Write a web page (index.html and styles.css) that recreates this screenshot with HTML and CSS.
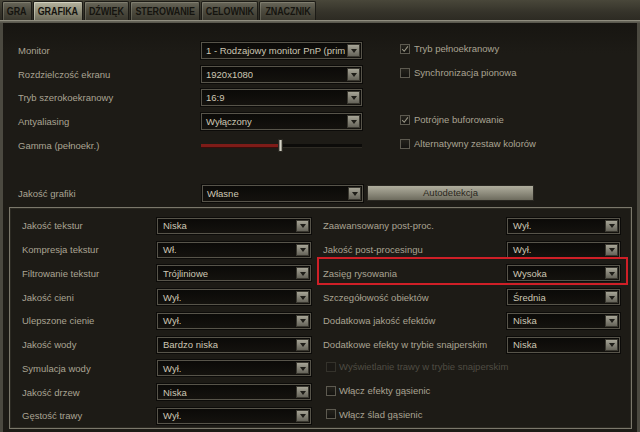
FILE: index.html
```html
<!DOCTYPE html>
<html lang="pl">
<head>
<meta charset="utf-8">
<link rel="stylesheet" href="styles.css">
</head>
<body>
<div class="window">
  <div class="tabs">
    <div class="tab t-gra"><span>GRA</span></div>
    <div class="tab t-grafika active"><span>GRAFIKA</span></div>
    <div class="tab t-dzwiek"><span>DŹWIĘK</span></div>
    <div class="tab t-sterowanie"><span>STEROWANIE</span></div>
    <div class="tab t-celownik"><span>CELOWNIK</span></div>
    <div class="tab t-znacznik"><span>ZNACZNIK</span></div>
  </div>
  <div class="topline"></div>
  <div class="content">
    <div class="general">
      <div class="lbl">Monitor</div>
      <div class="sel big"><span class="val">1 - Rodzajowy monitor PnP (prim</span><span class="arr"></span></div>
      <div></div>
      <label class="chk"><span class="cb on"><svg viewBox="0 0 10 10"><path d="M1.5 5.2 L4 7.8 L8.6 1.8"/></svg></span>Tryb pełnoekranowy</label>

      <div class="lbl">Rozdzielczość ekranu</div>
      <div class="sel big"><span class="val">1920x1080</span><span class="arr"></span></div>
      <div></div>
      <label class="chk"><span class="cb"></span>Synchronizacja pionowa</label>

      <div class="lbl">Tryb szerokoekranowy</div>
      <div class="sel big"><span class="val">16:9</span><span class="arr"></span></div>
      <div></div>
      <div></div>

      <div class="lbl">Antyaliasing</div>
      <div class="sel big"><span class="val">Wyłączony</span><span class="arr"></span></div>
      <div></div>
      <label class="chk"><span class="cb on"><svg viewBox="0 0 10 10"><path d="M1.5 5.2 L4 7.8 L8.6 1.8"/></svg></span>Potrójne buforowanie</label>

      <div class="lbl">Gamma (pełnoekr.)</div>
      <div class="slider"><div class="fill"></div><div class="rest"></div><div class="thumb"></div></div>
      <div></div>
      <label class="chk"><span class="cb"></span>Alternatywny zestaw kolorów</label>
    </div>

    <div class="quality">
      <div class="lbl qlbl">Jakość grafiki</div>
      <div class="sel big qsel"><span class="val">Własne</span><span class="arr"></span></div>
      <button class="btn">Autodetekcja</button>
    </div>

    <div class="box">
      <div class="lbl">Jakość tekstur</div>
      <div class="sel"><span class="val">Niska</span><span class="arr"></span></div>
      <div></div>
      <div class="lbl">Zaawansowany post-proc.</div>
      <div class="sel"><span class="val">Wył.</span><span class="arr"></span></div>

      <div class="lbl">Kompresja tekstur</div>
      <div class="sel"><span class="val">Wł.</span><span class="arr"></span></div>
      <div></div>
      <div class="lbl">Jakość post-procesingu</div>
      <div class="sel"><span class="val">Wył.</span><span class="arr"></span></div>

      <div class="lbl">Filtrowanie tekstur</div>
      <div class="sel"><span class="val">Trójliniowe</span><span class="arr"></span></div>
      <div></div>
      <div class="pair hl">
        <div class="lbl">Zasięg rysowania</div>
        <div class="sel"><span class="val">Wysoka</span><span class="arr"></span></div>
      </div>

      <div class="lbl">Jakość cieni</div>
      <div class="sel"><span class="val">Wył.</span><span class="arr"></span></div>
      <div></div>
      <div class="lbl">Szczegółowość obiektów</div>
      <div class="sel"><span class="val">Średnia</span><span class="arr"></span></div>

      <div class="lbl">Ulepszone cienie</div>
      <div class="sel"><span class="val">Wył.</span><span class="arr"></span></div>
      <div></div>
      <div class="lbl">Dodatkowa jakość efektów</div>
      <div class="sel"><span class="val">Niska</span><span class="arr"></span></div>

      <div class="lbl">Jakość wody</div>
      <div class="sel"><span class="val">Bardzo niska</span><span class="arr"></span></div>
      <div></div>
      <div class="lbl">Dodatkowe efekty w trybie snajperskim</div>
      <div class="sel"><span class="val">Niska</span><span class="arr"></span></div>

      <div class="lbl">Symulacja wody</div>
      <div class="sel"><span class="val">Wył.</span><span class="arr"></span></div>
      <div></div>
      <label class="chk wide disabled"><span class="cb"></span>Wyświetlanie trawy w trybie snajperskim</label>

      <div class="lbl">Jakość drzew</div>
      <div class="sel"><span class="val">Niska</span><span class="arr"></span></div>
      <div></div>
      <label class="chk wide"><span class="cb"></span>Włącz efekty gąsienic</label>

      <div class="lbl">Gęstość trawy</div>
      <div class="sel"><span class="val">Wył.</span><span class="arr"></span></div>
      <div></div>
      <label class="chk wide"><span class="cb"></span>Włącz ślad gąsienic</label>
    </div>
  </div>
</div>
</body>
</html>
```

FILE: styles.css
```css
* { box-sizing: border-box; }
html, body { margin: 0; padding: 0; }
body {
  background: #1c1a15;
  font-family: "Liberation Sans", Arial, sans-serif;
  font-size: 9.5px;
  color: #aaa493;
}
.window {
  width: 640px;
  height: 432px;
  display: flex;
  flex-direction: column;
  overflow: hidden;
}
.tabs {
  height: 20px;
  display: flex;
  padding-left: 2px;
  padding-top: 1px;
  background: linear-gradient(#49473a, #35332a 60%, #2d2b23);
}
.tab {
  height: 19px;
  display: flex;
  align-items: center;
  justify-content: center;
  border: 1px solid #1c1b16;
  border-bottom: none;
  border-radius: 2px 2px 0 0;
  background: linear-gradient(#69675a, #4e4c40 45%, #3a382e);
  box-shadow: inset 1px 1px 0 rgba(200,198,180,0.25);
  margin-right: 1px;
  color: #15140f;
  font-weight: bold;
  font-size: 11.5px;
}
.tab span { display: inline-block; transform: scaleX(0.78); white-space: nowrap; letter-spacing: -0.1px; }
.tab.active {
  background: linear-gradient(#b5b39f, #96947f 45%, #6f6d5c);
  color: #14130e;
  box-shadow: inset 1px 1px 0 rgba(255,255,240,0.4);
}
.t-gra { width: 30px; }
.t-grafika { width: 50px; }
.t-dzwiek { width: 45px; }
.t-sterowanie { width: 70px; }
.t-celownik { width: 57px; }
.t-znacznik { width: 57px; }
.topline {
  height: 3px;
  background: linear-gradient(#8f8d7f, #8f8d7f 1px, #6a685c 1px, #55534a);
}
.content {
  flex: 1;
  background: linear-gradient(#171511, #1d1b16 30px, #1d1b16);
  border-left: 3px solid #4b4940;
  border-right: 3px solid #4b4940;
  display: flex;
  flex-direction: column;
}
.general {
  display: grid;
  grid-template-columns: 183px 161px 38px 1fr;
  grid-template-rows: 24px 24px 23px 24px 24px;
  align-items: center;
  padding: 15px 0 0 15px;
}
.lbl { white-space: nowrap; }
.sel {
  height: 16px;
  border: 1px solid #57544a;
  background: linear-gradient(#0b0a08, #14120e);
  display: flex;
  align-items: center;
  justify-content: space-between;
  color: #cdc7b4;
  overflow: hidden;
  box-shadow: 0 0 0 1px #0c0b09;
}
.sel.big { height: 17px; }
.sel .val { padding-left: 4px; white-space: nowrap; overflow: hidden; }
.box .sel .val { padding-left: 5px; }
.arr {
  flex: none;
  width: 13px;
  height: 12px;
  margin-right: 1px;
  background: linear-gradient(#a7a597, #858377 50%, #66645a);
  border: 1px solid #3a3830;
  display: flex;
  align-items: center;
  justify-content: center;
}
.sel.big .arr { height: 13px; }
.arr::before {
  content: "";
  border-left: 3px solid transparent;
  border-right: 3px solid transparent;
  border-top: 4px solid #1e1d18;
  margin-top: 1px;
}
.chk {
  display: flex;
  align-items: center;
  gap: 4px;
  white-space: nowrap;
  margin-top: -3px;
}
.cb {
  width: 10px;
  height: 10px;
  border: 1px solid #5d5a50;
  background: linear-gradient(#24221c, #141310);
  display: inline-flex;
  flex: none;
}
.cb svg { width: 8px; height: 8px; }
.cb svg path { fill: none; stroke: #9c9988; stroke-width: 1.3; }
.slider {
  height: 17px;
  display: flex;
  align-items: center;
  position: relative;
  margin-top: 1px;
}
.slider .fill {
  width: 79px;
  height: 3px;
  background: #7e1c18;
  box-shadow: 0 1px 0 #3a0d0b;
}
.slider .rest {
  flex: 1;
  height: 3px;
  background: #0c0b09;
  box-shadow: 0 1px 0 #2e2b24;
}
.slider .thumb {
  position: absolute;
  left: 77px;
  top: 2px;
  width: 5px;
  height: 13px;
  background: linear-gradient(90deg, #6e6c62, #d4d2c6 50%, #7a786c);
  border: 1px solid #2a2822;
}
.quality {
  display: flex;
  align-items: center;
  padding-left: 15px;
  margin-top: 27px;
  height: 18px;
}
.qlbl { width: 184px; }
.qsel { width: 161px; }
.btn {
  margin-left: 4px;
  width: 167px;
  height: 16px;
  margin-top: -1px;
  border: 1px solid #2a2822;
  background: linear-gradient(#b0ae9e, #8f8d7e 50%, #6d6b5e);
  color: #2a2820;
  font-family: "Liberation Sans", Arial, sans-serif;
  font-size: 9.5px;
  padding: 0;
}
.box {
  margin: 5px 5px 0 6px;
  height: 222px;
  border: 1px solid #7b786b;
  box-shadow: inset 0 0 0 1px #2b2922;
  display: grid;
  grid-template-columns: 135px 154px 12px 184px 113px;
  grid-auto-rows: 23.75px;
  align-items: center;
  padding: 6px 0 0 12px;
}
.pair {
  grid-column: 4 / 6;
  display: grid;
  grid-template-columns: 184px 113px;
  align-items: center;
  position: relative;
}
.hl::after {
  content: "";
  position: absolute;
  left: -6px;
  right: -8px;
  top: -8px;
  bottom: -4px;
  border: 2px solid #cf1f27;
}
.chk.wide { grid-column: 4 / 6; padding-left: 3px; gap: 3px; }
.chk.disabled { color: #4f4c43; }
.chk.disabled .cb { border-color: #34322b; background: #1b1915; }
```
